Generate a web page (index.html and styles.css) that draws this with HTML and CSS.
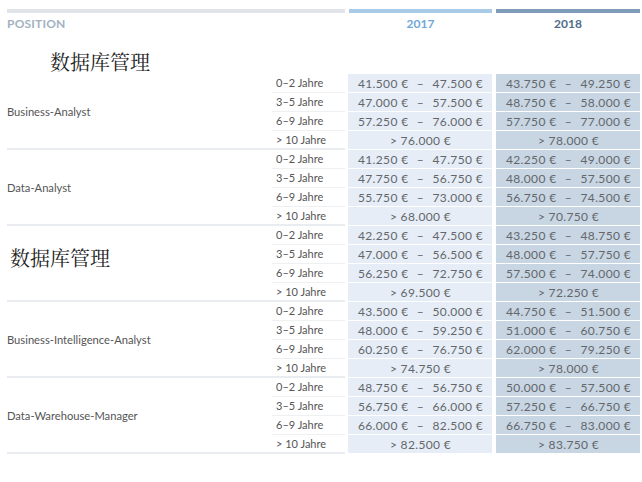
FILE: index.html
```html
<!DOCTYPE html>
<html lang="de">
<head>
<meta charset="utf-8">
<link rel="stylesheet" href="styles.css">
</head>
<body>
<div class="page">
  <div class="head">
    <div class="hcell hpos"><div class="bar bar-grey"></div><span>POSITION</span></div>
    <div class="hcell h17"><div class="bar bar-17"></div><span>2017</span></div>
    <div class="hcell h18"><div class="bar bar-18"></div><span>2018</span></div>
  </div>
  <div class="caption">数据库管理</div>

  <div class="group">
    <div class="label">Business-Analyst</div>
    <div class="yr">0–2 Jahre</div><div class="v v17"><span>41.500 €</span><span>–</span><span>47.500 €</span></div><div class="v v18"><span>43.750 €</span><span>–</span><span>49.250 €</span></div>
    <div class="yr">3–5 Jahre</div><div class="v v17"><span>47.000 €</span><span>–</span><span>57.500 €</span></div><div class="v v18"><span>48.750 €</span><span>–</span><span>58.000 €</span></div>
    <div class="yr">6–9 Jahre</div><div class="v v17"><span>57.250 €</span><span>–</span><span>76.000 €</span></div><div class="v v18"><span>57.750 €</span><span>–</span><span>77.000 €</span></div>
    <div class="yr last">&gt; 10 Jahre</div><div class="v v17 one">&gt; 76.000 €</div><div class="v v18 one">&gt; 78.000 €</div>
  </div>

  <div class="group">
    <div class="label">Data-Analyst</div>
    <div class="yr">0–2 Jahre</div><div class="v v17"><span>41.250 €</span><span>–</span><span>47.750 €</span></div><div class="v v18"><span>42.250 €</span><span>–</span><span>49.000 €</span></div>
    <div class="yr">3–5 Jahre</div><div class="v v17"><span>47.750 €</span><span>–</span><span>56.750 €</span></div><div class="v v18"><span>48.000 €</span><span>–</span><span>57.500 €</span></div>
    <div class="yr">6–9 Jahre</div><div class="v v17"><span>55.750 €</span><span>–</span><span>73.000 €</span></div><div class="v v18"><span>56.750 €</span><span>–</span><span>74.500 €</span></div>
    <div class="yr last">&gt; 10 Jahre</div><div class="v v17 one">&gt; 68.000 €</div><div class="v v18 one">&gt; 70.750 €</div>
  </div>

  <div class="group">
    <div class="label cjk">数据库管理</div>
    <div class="yr">0–2 Jahre</div><div class="v v17"><span>42.250 €</span><span>–</span><span>47.500 €</span></div><div class="v v18"><span>43.250 €</span><span>–</span><span>48.750 €</span></div>
    <div class="yr">3–5 Jahre</div><div class="v v17"><span>47.000 €</span><span>–</span><span>56.500 €</span></div><div class="v v18"><span>48.000 €</span><span>–</span><span>57.750 €</span></div>
    <div class="yr">6–9 Jahre</div><div class="v v17"><span>56.250 €</span><span>–</span><span>72.750 €</span></div><div class="v v18"><span>57.500 €</span><span>–</span><span>74.000 €</span></div>
    <div class="yr last">&gt; 10 Jahre</div><div class="v v17 one">&gt; 69.500 €</div><div class="v v18 one">&gt; 72.250 €</div>
  </div>

  <div class="group">
    <div class="label">Business-Intelligence-Analyst</div>
    <div class="yr">0–2 Jahre</div><div class="v v17"><span>43.500 €</span><span>–</span><span>50.000 €</span></div><div class="v v18"><span>44.750 €</span><span>–</span><span>51.500 €</span></div>
    <div class="yr">3–5 Jahre</div><div class="v v17"><span>48.000 €</span><span>–</span><span>59.250 €</span></div><div class="v v18"><span>51.000 €</span><span>–</span><span>60.750 €</span></div>
    <div class="yr">6–9 Jahre</div><div class="v v17"><span>60.250 €</span><span>–</span><span>76.750 €</span></div><div class="v v18"><span>62.000 €</span><span>–</span><span>79.250 €</span></div>
    <div class="yr last">&gt; 10 Jahre</div><div class="v v17 one">&gt; 74.750 €</div><div class="v v18 one">&gt; 78.000 €</div>
  </div>

  <div class="group">
    <div class="label">Data-Warehouse-Manager</div>
    <div class="yr">0–2 Jahre</div><div class="v v17"><span>48.750 €</span><span>–</span><span>56.750 €</span></div><div class="v v18"><span>50.000 €</span><span>–</span><span>57.500 €</span></div>
    <div class="yr">3–5 Jahre</div><div class="v v17"><span>56.750 €</span><span>–</span><span>66.000 €</span></div><div class="v v18"><span>57.250 €</span><span>–</span><span>66.750 €</span></div>
    <div class="yr">6–9 Jahre</div><div class="v v17"><span>66.000 €</span><span>–</span><span>82.500 €</span></div><div class="v v18"><span>66.750 €</span><span>–</span><span>83.000 €</span></div>
    <div class="yr last">&gt; 10 Jahre</div><div class="v v17 one">&gt; 82.500 €</div><div class="v v18 one">&gt; 83.750 €</div>
  </div>
</div>
</body>
</html>
```

FILE: styles.css
```css
html, body {
  margin: 0;
  padding: 0;
  background: #ffffff;
}
.page {
  padding: 9px 2px 0 7px;
  font-family: Lato, "Noto Sans", sans-serif;
  font-size: 11px;
  color: #5a5a5a;
}
.head {
  display: grid;
  grid-template-columns: 338px 147px 148px;
}
.hcell {
  display: flex;
  flex-direction: column;
}
.h17, .h18 {
  align-items: center;
}
.h17 .bar { margin-left: 4px; align-self: stretch; }
.h18 .bar { margin-left: 4px; align-self: stretch; }
.h17 span, .h18 span { padding-left: 4px; }
.bar {
  height: 4px;
}
.bar-grey { background: #e1e5ea; }
.bar-17 { background: #a9cbe8; }
.bar-18 { background: #7f9db8; }
.hcell span {
  font-weight: 700;
  font-size: 12px;
  line-height: 19px;
  margin-top: 1px;
}
.hpos span { color: #a2b1c2; letter-spacing: 0.2px; }
.h17 span { color: #6ea7d8; }
.h18 span { color: #4e6d8c; }

.caption {
  font-family: "Noto Serif CJK SC", "Noto Sans CJK SC", serif;
  font-size: 20px;
  line-height: 26px;
  color: #222;
  padding: 16px 0 0 43px;
  height: 25px;
}

.group {
  display: grid;
  grid-template-columns: 265px 73px 147px 148px;
  grid-template-rows: repeat(4, 19px);
}
.label {
  grid-row: 1 / 5;
  grid-column: 1;
  display: flex;
  align-items: center;
  border-bottom: 2px solid #e9ecf0;
  color: #555;
  font-size: 11.2px;
}
.label.cjk {
  font-family: "Noto Serif CJK SC", "Noto Sans CJK SC", serif;
  font-size: 20px;
  color: #222;
  padding-left: 3px;
  padding-bottom: 12px;
}
.yr {
  grid-column: 2;
  border-bottom: 1px solid #eef1f4;
  padding-left: 4px;
  line-height: 18px;
  color: #555;
}
.yr.last {
  border-bottom: 2px solid #e9ecf0;
  line-height: 17px;
}
.v {
  height: 18px;
  margin-bottom: 1px;
  display: flex;
  align-items: center;
  justify-content: space-between;
  padding: 0 9px 0 10px;
  color: #63676c;
  font-size: 12px;
  letter-spacing: 0.35px;
}
.v17 {
  grid-column: 3;
  margin-left: 3px;
  background: #e6edf6;
}
.v18 {
  grid-column: 4;
  margin-left: 4px;
  background: #c8d5e2;
}
.v.one {
  justify-content: center;
}
```
